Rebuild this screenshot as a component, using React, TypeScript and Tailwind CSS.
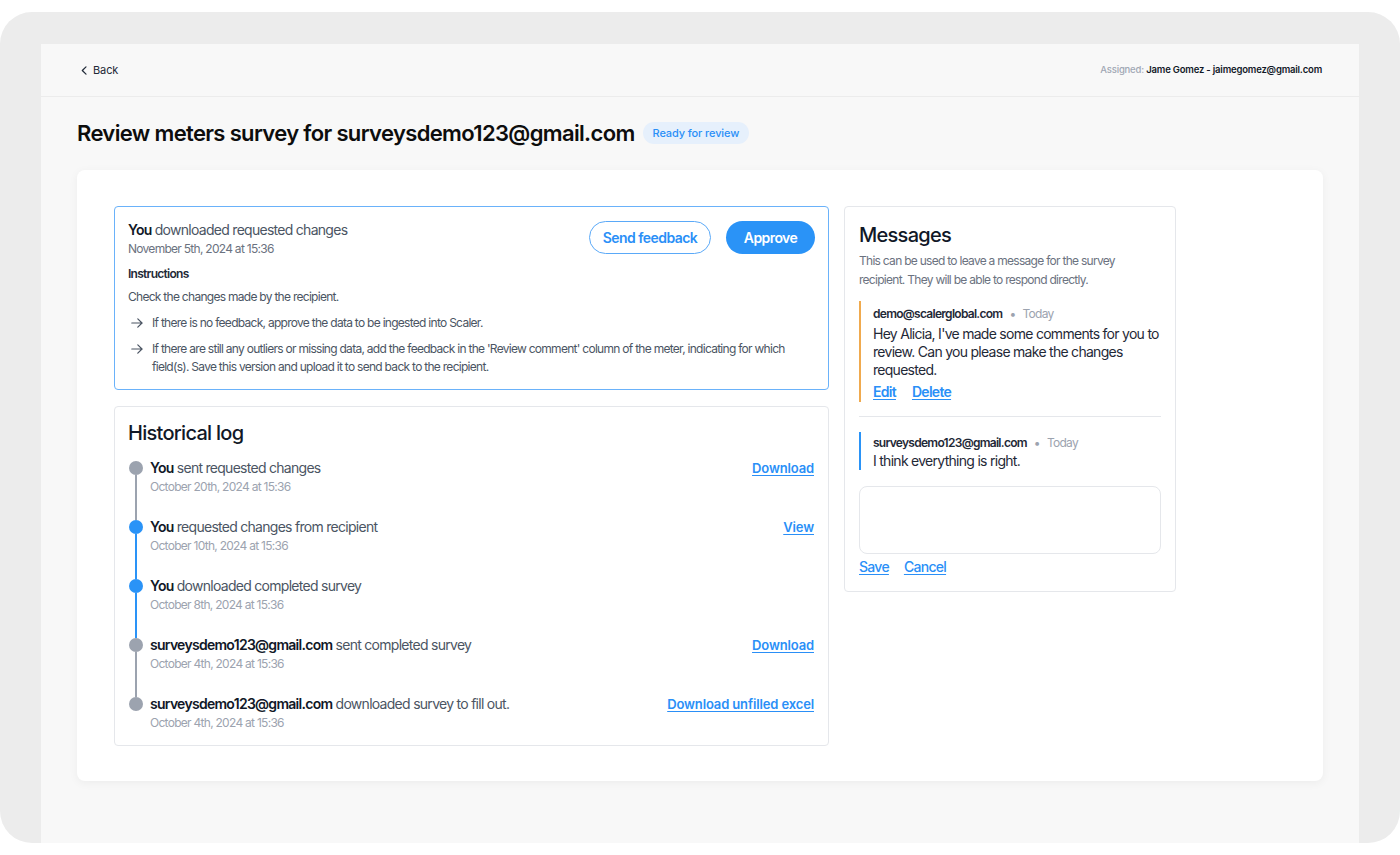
type LogItem = {
  actor: string;
  action: string;
  date: string;
  link?: string;
  active: boolean;
};

const logItems: LogItem[] = [
  { actor: "You", action: "sent requested changes", date: "October 20th, 2024 at 15:36", link: "Download", active: false },
  { actor: "You", action: "requested changes from recipient", date: "October 10th, 2024 at 15:36", link: "View", active: true },
  { actor: "You", action: "downloaded completed survey", date: "October 8th, 2024 at 15:36", active: true },
  { actor: "surveysdemo123@gmail.com", action: "sent completed survey", date: "October 4th, 2024 at 15:36", link: "Download", active: false },
  { actor: "surveysdemo123@gmail.com", action: "downloaded survey to fill out.", date: "October 4th, 2024 at 15:36", link: "Download unfilled excel", active: false },
];

function Arrow() {
  return (
    <svg width="12" height="10" viewBox="0 0 12 10" fill="none" stroke="#4b5563" strokeWidth="1.2" strokeLinecap="round" strokeLinejoin="round" className="mt-[4px] ml-[3px] shrink-0">
      <path d="M0.8 5h10.4M6.8 0.8L11 5l-4.2 4.2" />
    </svg>
  );
}

function InstructionsCard() {
  return (
    <div className="rounded-[4px] border border-[#6ab2fa] bg-white px-[13px] pt-[13px] pb-[13px]">
      <div className="flex items-start justify-between">
        <div>
          <div className="text-[14px] leading-[20px] text-[#4b5563]">
            <span className="font-semibold text-[#111827]">You</span> downloaded requested changes
          </div>
          <div className="text-[12px] leading-[18px] text-[#6b7280]">November 5th, 2024 at 15:36</div>
        </div>
        <div className="mt-px flex gap-[15px] tracking-[-0.035em]">
          <button className="h-[33px] w-[122px] rounded-full border border-[#5aa9f8] text-[14px] font-semibold text-[#2a8ff7]">
            Send feedback
          </button>
          <button className="h-[33px] w-[89px] rounded-full bg-[#2a93f7] text-[14px] font-semibold text-white">
            Approve
          </button>
        </div>
      </div>
      <div className="mt-2 text-[12px] leading-[16px] font-semibold text-[#1f2937]">Instructions</div>
      <div className="mt-1.5 text-[12px] leading-[18px] text-[#4b5563]">Check the changes made by the recipient.</div>
      <ul className="mt-2 flex flex-col gap-2 text-[12px] leading-[18px] text-[#4b5563]">
        <li className="flex gap-[9px]">
          <Arrow />
          <span>If there is no feedback, approve the data to be ingested into Scaler.</span>
        </li>
        <li className="flex gap-[9px]">
          <Arrow />
          <span>
            If there are still any outliers or missing data, add the feedback in the 'Review comment' column of the meter, indicating for which
            field(s). Save this version and upload it to send back to the recipient.
          </span>
        </li>
      </ul>
    </div>
  );
}

function HistoricalLog() {
  return (
    <div className="rounded-[4px] border border-[#e5e7eb] bg-white px-[14px] pt-[12px] pb-[13px]">
      <h2 className="-ml-px text-[20px] leading-[28px] font-medium text-[#111827]">Historical log</h2>
      <div className="mt-[11px] flex flex-col">
        {logItems.map((item, i) => {
          const last = i === logItems.length - 1;
          const color = item.active ? "bg-[#2a93f7]" : "bg-[#9ca3af]";
          return (
            <div key={i} className={last ? "flex gap-[7px]" : "flex gap-[7px] pb-[21px]"}>
              <div className="flex w-[14px] shrink-0 flex-col items-center pt-[3px]">
                <div className={`h-[14px] w-[14px] shrink-0 rounded-full ${color}`} />
                {!last && <div className={`mb-[-24px] w-[2px] flex-1 ${color}`} />}
              </div>
              <div className="flex-1">
                <div className="text-[14px] leading-[20px] text-[#4b5563]">
                  <span className="font-semibold text-[#111827]">{item.actor}</span> {item.action}
                </div>
                <div className="text-[12px] leading-[18px] text-[#9ca3af]">{item.date}</div>
              </div>
              {item.link && (
                <a className="text-[13px] leading-[20px] font-semibold tracking-[-0.01em] text-[#2a8ff7] underline underline-offset-2">{item.link}</a>
              )}
            </div>
          );
        })}
      </div>
    </div>
  );
}

function Messages() {
  return (
    <div className="w-[332px] self-start rounded-[4px] border border-[#e5e7eb] bg-white px-[14px] pt-[14px] pb-[14px]">
      <h2 className="text-[20px] leading-[28px] font-medium text-[#111827]">Messages</h2>
      <p className="mt-[2px] text-[12px] leading-[19px] text-[#6b7280]">
        This can be used to leave a message for the survey recipient. They will be able to respond directly.
      </p>
      <div className="mt-[12px] border-l-2 border-[#f0aa4e] pt-[4px] pl-3">
        <div className="text-[12px] leading-[18px]">
          <span className="font-semibold text-[#1f2937]">demo@scalerglobal.com</span>
          <span className="mx-[7px] text-[#9ca3af]">•</span>
          <span className="text-[#9ca3af]">Today</span>
        </div>
        <p className="mt-[2px] text-[14px] leading-[18px] text-[#1f2937]">
          Hey Alicia, I've made some comments for you to review. Can you please make the changes requested.
        </p>
        <div className="mt-[3px] flex gap-4 text-[14px] leading-[20px] font-semibold text-[#2a8ff7]">
          <a className="underline underline-offset-2">Edit</a>
          <a className="underline underline-offset-2">Delete</a>
        </div>
      </div>
      <div className="mt-[14px] h-px bg-[#e5e7eb]" />
      <div className="mt-[15px] border-l-2 border-[#2a93f7] pt-[2px] pl-3">
        <div className="text-[12px] leading-[18px]">
          <span className="font-semibold text-[#1f2937]">surveysdemo123@gmail.com</span>
          <span className="mx-[7px] text-[#9ca3af]">•</span>
          <span className="text-[#9ca3af]">Today</span>
        </div>
        <p className="text-[14px] leading-[18px] text-[#1f2937]">I think everything is right.</p>
      </div>
      <textarea className="mt-[16px] block h-[68px] w-full resize-none rounded-[8px] border border-[#e5e7eb] outline-none" />
      <div className="mt-[3px] flex gap-[15px] text-[14px] leading-[20px] font-medium text-[#2a8ff7]">
        <a className="underline underline-offset-2">Save</a>
        <a className="underline underline-offset-2">Cancel</a>
      </div>
    </div>
  );
}

export default function App() {
  return (
    <div className="h-[855px] overflow-hidden bg-white pt-3 font-['Inter',sans-serif] tracking-[-0.045em]">
      <div className="h-[831px] rounded-[32px] bg-[#ececec] px-[41px] pt-8">
        <div className="h-full bg-[#f8f8f8]">
          <header className="flex h-[53px] items-center justify-between border-b border-[#ececec] pr-[37px] pl-[40px]">
            <button className="flex items-center gap-[6px] text-[11px] tracking-[-0.01em] text-[#1f2937]">
              <svg width="6" height="9" viewBox="0 0 6 9" fill="none" stroke="#1f2937" strokeWidth="1.2" strokeLinecap="round" strokeLinejoin="round">
                <path d="M5 0.8L1.3 4.5L5 8.2" />
              </svg>
              Back
            </button>
            <div className="text-[9.5px] font-semibold tracking-[-0.02em] text-[#111827]">
              <span className="font-medium text-[#a0a7b4]">Assigned: </span>Jame Gomez - jaimegomez@gmail.com
            </div>
          </header>
          <main className="px-9">
            <div className="mt-[20px] flex h-[32px] items-center gap-2">
              <h1 className="text-[22px] font-semibold tracking-[-0.65px] text-[#0d0d0d]">
                Review meters survey for surveysdemo123@gmail.com
              </h1>
              <span className="rounded-full bg-[#e6f0fc] px-[10px] py-[3px] text-[11px] font-medium tracking-[-0.01em] text-[#2a8ff7]">Ready for review</span>
            </div>
            <div className="mt-[21px] flex h-[611px] gap-[15px] rounded-[8px] bg-white p-[37px] pt-[36px] shadow-[0_2px_10px_rgba(0,0,0,0.05)]">
              <div className="flex w-[715px] flex-col gap-4">
                <InstructionsCard />
                <HistoricalLog />
              </div>
              <Messages />
            </div>
          </main>
        </div>
      </div>
    </div>
  );
}
